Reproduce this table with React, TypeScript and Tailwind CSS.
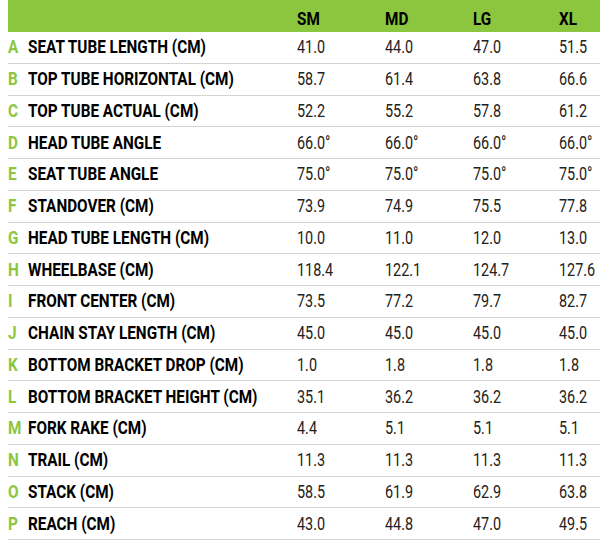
import React from "react";

const rows: [string, string, string[]][] = [
  ["A", "SEAT TUBE LENGTH (CM)", ["41.0", "44.0", "47.0", "51.5"]],
  ["B", "TOP TUBE HORIZONTAL (CM)", ["58.7", "61.4", "63.8", "66.6"]],
  ["C", "TOP TUBE ACTUAL (CM)", ["52.2", "55.2", "57.8", "61.2"]],
  ["D", "HEAD TUBE ANGLE", ["66.0°", "66.0°", "66.0°", "66.0°"]],
  ["E", "SEAT TUBE ANGLE", ["75.0°", "75.0°", "75.0°", "75.0°"]],
  ["F", "STANDOVER (CM)", ["73.9", "74.9", "75.5", "77.8"]],
  ["G", "HEAD TUBE LENGTH (CM)", ["10.0", "11.0", "12.0", "13.0"]],
  ["H", "WHEELBASE (CM)", ["118.4", "122.1", "124.7", "127.6"]],
  ["I", "FRONT CENTER (CM)", ["73.5", "77.2", "79.7", "82.7"]],
  ["J", "CHAIN STAY LENGTH (CM)", ["45.0", "45.0", "45.0", "45.0"]],
  ["K", "BOTTOM BRACKET DROP (CM)", ["1.0", "1.8", "1.8", "1.8"]],
  ["L", "BOTTOM BRACKET HEIGHT (CM)", ["35.1", "36.2", "36.2", "36.2"]],
  ["M", "FORK RAKE (CM)", ["4.4", "5.1", "5.1", "5.1"]],
  ["N", "TRAIL (CM)", ["11.3", "11.3", "11.3", "11.3"]],
  ["O", "STACK (CM)", ["58.5", "61.9", "62.9", "63.8"]],
  ["P", "REACH (CM)", ["43.0", "44.8", "47.0", "49.5"]],
];

const cols = "grid grid-cols-[20px_269px_88px_88px_86px_41px]";

export default function App() {
  return (
    <div className="w-[600px] h-[544px] bg-white pl-2 overflow-hidden font-['Roboto',sans-serif]">
      <div className={`${cols} h-[32px] bg-[#8cc63f] items-center pt-[6px] text-[18px] leading-none font-bold text-black`}>
        <div />
        <div />
        {["SM", "MD", "LG", "XL"].map((h) => (
          <div key={h} className="whitespace-nowrap">
            <span className="inline-block origin-left [transform:scaleX(0.85)]">{h}</span>
          </div>
        ))}
      </div>
      {rows.map(([l, label, vals]) => (
        <div
          key={l}
          className={`${cols} h-[31.75px] items-center border-b border-[#d4d4d4] leading-none`}
        >
          <div className="font-bold text-[18px] text-[#8cc63f] whitespace-nowrap">
            <span className="inline-block origin-left [transform:scaleX(0.85)]">{l}</span>
          </div>
          <div className="font-bold text-[18px] text-black whitespace-nowrap">
            <span className="inline-block origin-left [transform:scaleX(0.85)]">{label}</span>
          </div>
          {vals.map((v, i) => (
            <div key={i} className="text-[18px] text-[#222] whitespace-nowrap">
              <span className="inline-block origin-left [transform:scaleX(0.8)]">{v}</span>
            </div>
          ))}
        </div>
      ))}
    </div>
  );
}
